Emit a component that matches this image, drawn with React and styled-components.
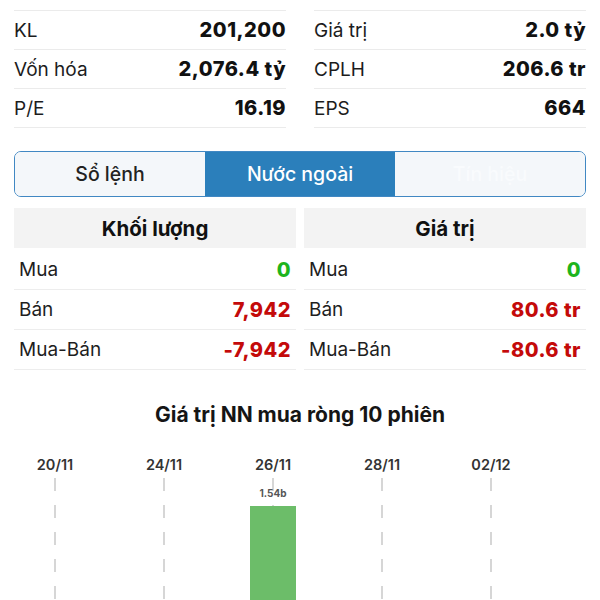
import React from "react";
import styled, { createGlobalStyle } from "styled-components";

const Global = createGlobalStyle`
  *, *::before, *::after { box-sizing: border-box; }
  html, body { margin: 0; padding: 0; background: #fff; overflow: hidden; }
  body { font-family: Inter, "Noto Sans", "Liberation Sans", sans-serif; color: #1a1a1a; }
`;

const Page = styled.div`
  width: 600px;
  height: 600px;
  overflow: hidden;
  background: #fff;
`;

const StatsGrid = styled.div`
  display: grid;
  grid-template-columns: 1fr 1fr;
  column-gap: 28px;
  padding: 10px 14px 0;
`;

const StatsCol = styled.div`
  display: flex;
  flex-direction: column;
`;

const StatRow = styled.div`
  display: flex;
  align-items: center;
  justify-content: space-between;
  height: 39px;
  border-top: 1px solid #ebebeb;
  &:last-child { height: 40px; border-bottom: 1px solid #ebebeb; }
`;

const StatLabel = styled.span`
  font-size: 19px;
  font-weight: 400;
  color: #1c1c1c;
`;

const StatValue = styled.span`
  font-size: 20px;
  font-weight: 800;
  letter-spacing: 0.5px;
  color: #111;
`;

const Tabs = styled.div`
  display: grid;
  grid-template-columns: repeat(3, 1fr);
  height: 46px;
  margin: 23px 14px 0;
  border: 1.5px solid #4188c3;
  border-radius: 7px;
  overflow: hidden;
`;

const Tab = styled.div`
  display: flex;
  align-items: center;
  justify-content: center;
  font-size: 19.5px;
  font-weight: 500;
  background: ${(p) => (p.$active ? "#2b7fbb" : "#f4f7fa")};
  color: ${(p) => (p.$active ? "#ffffff" : p.$faded ? "#f9fbfd" : "#222")};
`;

const FlowGrid = styled.div`
  display: grid;
  grid-template-columns: 1fr 1fr;
  column-gap: 8px;
  margin: 11px 14px 0;
`;

const FlowCol = styled.div`
  display: flex;
  flex-direction: column;
`;

const ColHeader = styled.div`
  display: flex;
  align-items: center;
  justify-content: center;
  height: 40px;
  margin-bottom: 2px;
  background: #f3f3f3;
  font-size: 20.5px;
  font-weight: 700;
  color: #111;
`;

const FlowRow = styled.div`
  display: flex;
  align-items: center;
  justify-content: space-between;
  height: 40px;
  padding: 0 5px;
  border-bottom: 1px solid #ededed;
`;

const FlowLabel = styled.span`
  font-size: 19px;
  font-weight: 400;
  color: #1e1e1e;
`;

const FlowValue = styled.span`
  font-size: 20px;
  font-weight: 800;
  letter-spacing: 0.5px;
  color: ${(p) => (p.$tone === "up" ? "#1db41d" : p.$tone === "down" ? "#c40a0a" : "#111")};
`;

const ChartTitle = styled.div`
  margin-top: 32px;
  text-align: center;
  font-size: 21px;
  line-height: 26px;
  font-weight: 700;
  color: #151515;
`;

const ChartSvg = styled.svg`
  display: block;
  margin-top: 2px;
`;

const leftStats = [
  ["KL", "201,200"],
  ["Vốn hóa", "2,076.4 tỷ"],
  ["P/E", "16.19"],
];
const rightStats = [
  ["Giá trị", "2.0 tỷ"],
  ["CPLH", "206.6 tr"],
  ["EPS", "664"],
];

const flows = [
  {
    title: "Khối lượng",
    rows: [
      ["Mua", "0", "up"],
      ["Bán", "7,942", "down"],
      ["Mua-Bán", "-7,942", "down"],
    ],
  },
  {
    title: "Giá trị",
    rows: [
      ["Mua", "0", "up"],
      ["Bán", "80.6 tr", "down"],
      ["Mua-Bán", "-80.6 tr", "down"],
    ],
  },
];

const dates = ["20/11", "24/11", "26/11", "28/11", "02/12"];

function Chart() {
  const xs = dates.map((_, i) => 55 + i * 109);
  const dashes = [];
  xs.forEach((x, i) => {
    for (let y = 48; y < 175; y += 27) {
      dashes.push(
        <line key={`${i}-${y}`} x1={x} x2={x} y1={y} y2={y + 13} stroke="#c9c9c9" strokeWidth="1.5" />
      );
    }
  });
  return (
    <ChartSvg width="600" height="170" viewBox="0 0 600 170">
      {dates.map((d, i) => (
        <text
          key={d}
          x={xs[i]}
          y={40}
          textAnchor="middle"
          fontFamily="Inter, 'Noto Sans', sans-serif"
          fontSize="14.5"
          fontWeight="600"
          fill="#333"
        >
          {d}
        </text>
      ))}
      {dashes}
      <rect x="250" y="76" width="46" height="120" fill="#6cbd69" />
      <text
        x="273"
        y="67"
        textAnchor="middle"
        fontFamily="Inter, 'Noto Sans', sans-serif"
        fontSize="10"
        fontWeight="700"
        fill="#555"
      >
        1.54b
      </text>
    </ChartSvg>
  );
}

export default function App() {
  return (
    <Page>
      <Global />
      <StatsGrid>
        {[leftStats, rightStats].map((col, ci) => (
          <StatsCol key={ci}>
            {col.map(([l, v]) => (
              <StatRow key={l}>
                <StatLabel>{l}</StatLabel>
                <StatValue>{v}</StatValue>
              </StatRow>
            ))}
          </StatsCol>
        ))}
      </StatsGrid>
      <Tabs>
        <Tab>Sổ lệnh</Tab>
        <Tab $active>Nước ngoài</Tab>
        <Tab $faded>Tín hiệu</Tab>
      </Tabs>
      <FlowGrid>
        {flows.map((f) => (
          <FlowCol key={f.title}>
            <ColHeader>{f.title}</ColHeader>
            {f.rows.map(([l, v, t]) => (
              <FlowRow key={l}>
                <FlowLabel>{l}</FlowLabel>
                <FlowValue $tone={t}>{v}</FlowValue>
              </FlowRow>
            ))}
          </FlowCol>
        ))}
      </FlowGrid>
      <ChartTitle>Giá trị NN mua ròng 10 phiên</ChartTitle>
      <Chart />
    </Page>
  );
}
